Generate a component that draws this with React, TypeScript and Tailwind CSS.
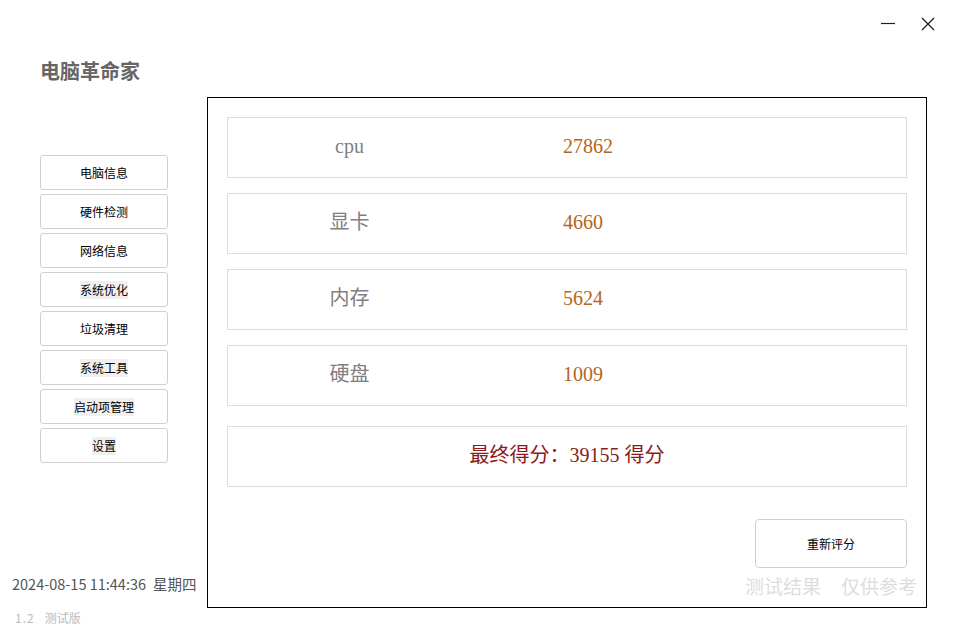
import React from 'react';

const navItems = ['电脑信息', '硬件检测', '网络信息', '系统优化', '垃圾清理', '系统工具', '启动项管理', '设置'];
const shaded = ['系统优化', '系统工具', '启动项管理', '设置'];

const scores = [
  { label: 'cpu', value: '27862' },
  { label: '显卡', value: '4660' },
  { label: '内存', value: '5624' },
  { label: '硬盘', value: '1009' },
];

const sans = "font-['Microsoft_YaHei','Noto_Sans_CJK_SC',sans-serif]";
const serif = "font-['Liberation_Serif','Noto_Sans_CJK_SC',serif]";

const App = () => {
  return (
    <div className={`w-[960px] h-[633px] bg-white flex flex-col overflow-hidden ${sans}`}>
      {/* Header */}
      <div className="h-[97px] flex justify-between">
        <h1 className="pl-10 pt-[58px] text-[20px] leading-[26px] font-bold text-[#666666]">电脑革命家</h1>
        <div className="flex items-start gap-[24px] pt-[16px] pr-[24px]">
          <svg width="16" height="16" viewBox="0 0 16 16">
            <line x1="1" y1="7.5" x2="15" y2="7.5" stroke="#222" strokeWidth="1.2" />
          </svg>
          <svg width="16" height="16" viewBox="0 0 16 16">
            <path d="M2 2 L14 14 M14 2 L2 14" stroke="#222" strokeWidth="1.3" fill="none" />
          </svg>
        </div>
      </div>

      <div className="flex-1 flex">
        {/* Sidebar */}
        <div className="w-[207px] flex flex-col">
          <div className="pt-[58px] pl-10 flex flex-col gap-[4px]">
            {navItems.map((item) => (
              <button
                key={item}
                className="w-[128px] h-[35px] border border-[#d0d0d0] rounded-[3px] bg-white flex items-center justify-center text-[12px] text-black"
              >
                <span className={shaded.includes(item) ? 'bg-[#f0f0f0]' : ''}>{item}</span>
              </button>
            ))}
          </div>
          <div className="mt-auto pl-3 pb-[8px]">
            <div className="text-[14.5px] leading-[18px] text-[#555555]">
              <span>2024-08-15 11:44:36</span>
              <span className="ml-[7px]">星期四</span>
            </div>
            <div className="mt-[18px] pl-[3px] text-[12px] leading-[14px] text-[#bbbbbb]">
              <span className="tracking-[1px]">1.2</span>
              <span className="ml-[10px]">测试版</span>
            </div>
          </div>
        </div>

        {/* Main panel */}
        <div className="w-[720px] h-[511px] border border-black px-[19px] pt-[19px] flex flex-col">
          <div className="flex flex-col gap-[15px]">
            {scores.map((s) => (
              <div key={s.label} className={`h-[61px] pb-[4px] border border-[#dcdcdc] flex items-center text-[20px] ${serif}`}>
                <div className="w-[243px] text-center text-[#808080]">{s.label}</div>
                <div className="ml-[92px] text-[#b5651d]">{s.value}</div>
              </div>
            ))}
          </div>
          <div className={`mt-[20px] h-[61px] pb-[4px] border border-[#dcdcdc] flex items-center justify-center text-[20px] text-[#8b1a1a] ${serif}`}>
            最终得分：39155 得分
          </div>
          <div className="mt-[32px] flex justify-end">
            <button className="w-[152px] h-[49px] border border-[#d0d0d0] rounded-[4px] bg-white text-[12px] text-black">
              重新评分
            </button>
          </div>
          <div className="mt-[6px] -mr-[10px] flex justify-end gap-[20px] text-[19px] leading-[24px] text-[#dddddd]">
            <span>测试结果</span>
            <span>仅供参考</span>
          </div>
        </div>
      </div>
    </div>
  );
};

export default App;
